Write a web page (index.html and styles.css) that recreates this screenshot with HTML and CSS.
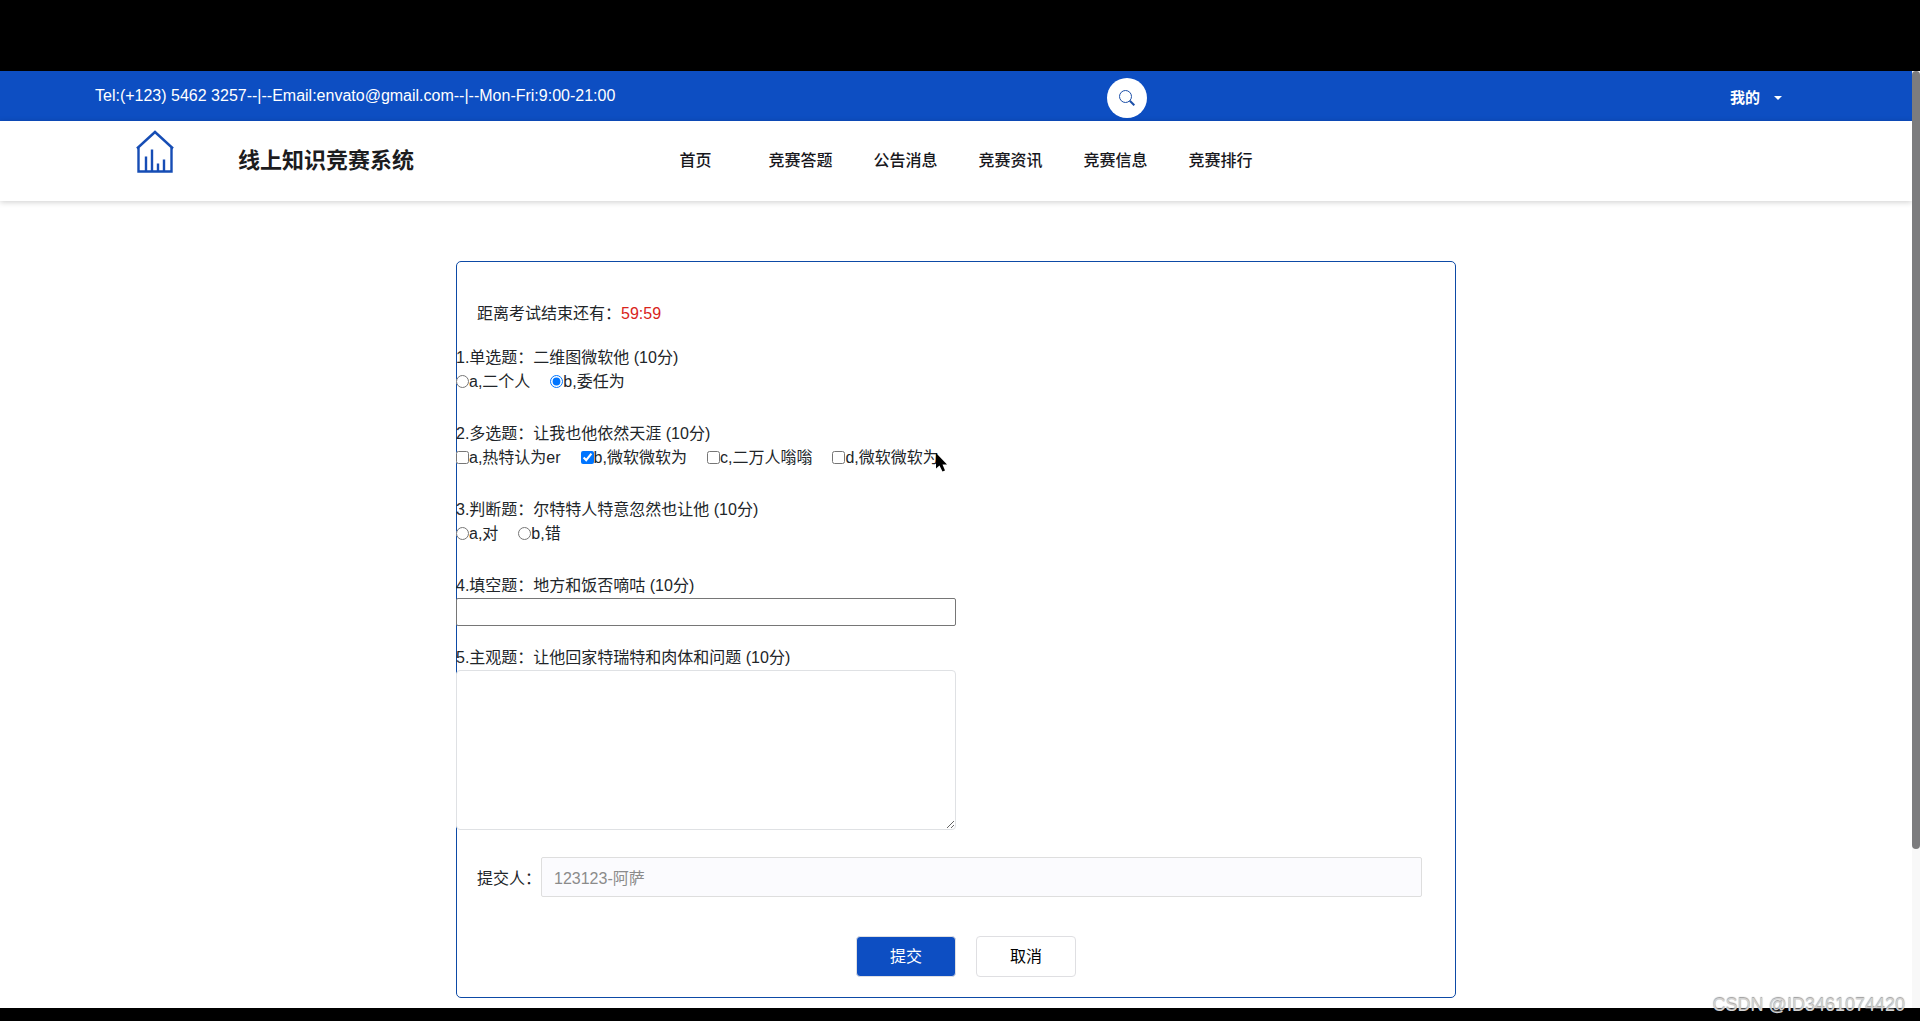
FILE: index.html
```html
<!DOCTYPE html>
<html lang="zh-CN">
<head>
    <meta charset="UTF-8">
    <meta name="viewport" content="width=device-width, initial-scale=1.0">
    <title>线上知识竞赛系统</title>
    <link rel="stylesheet" href="styles.css">
</head>
<body>
    <div class="frame">
        <div class="page">
            <div class="topbar">
                <div class="contact">Tel:(+123) 5462 3257--|--Email:envato@gmail.com--|--Mon-Fri:9:00-21:00</div>
                <button class="search-btn" type="button" aria-label="搜索">
                    <svg viewBox="0 0 16 16" fill="none" stroke="#1c4fa8">
                        <circle cx="6.5" cy="6.5" r="6"></circle>
                        <path d="M10.8 10.8L15.3 15.3" stroke-width="2"></path>
                    </svg>
                </button>
                <div class="account">
                    <button class="account-btn" type="button">我的<span class="caret"></span></button>
                </div>
            </div>

            <header class="header">
                <a class="brand" href="#">
                    <svg class="logo" viewBox="0 0 38 43" fill="none" stroke="#164db5" stroke-width="2.4">
                        <path d="M1 18.5L19 2L37 18.5"></path>
                        <path d="M2.5 17.5V41.5H35.5V17.5"></path>
                        <path d="M10 41V26.5M16 41V19.5M22 41V33.5M28 41V29.5"></path>
                    </svg>
                    <span class="brand-name">线上知识竞赛系统</span>
                </a>
                <nav class="nav">
                    <a href="#">首页</a>
                    <a href="#">竞赛答题</a>
                    <a href="#">公告消息</a>
                    <a href="#">竞赛资讯</a>
                    <a href="#">竞赛信息</a>
                    <a href="#">竞赛排行</a>
                </nav>
            </header>

            <form class="exam">
                <p class="countdown">距离考试结束还有：<span class="time">59:59</span></p>

                <div class="questions">
                    <div class="question">
                        <div>1.单选题：二维图微软他 (10分)</div>
                        <div class="options">
                            <label><input type="radio" name="q1">a,二个人</label>
                            <label><input type="radio" name="q1" checked>b,委任为</label>
                        </div>
                    </div>
                    <div class="question">
                        <div>2.多选题：让我也他依然天涯 (10分)</div>
                        <div class="options">
                            <label><input type="checkbox" name="q2">a,热特认为er</label>
                            <label><input type="checkbox" name="q2" checked>b,微软微软为</label>
                            <label><input type="checkbox" name="q2">c,二万人嗡嗡</label>
                            <label class="hovered"><input type="checkbox" name="q2">d,微软微软为
                                <svg class="cursor" viewBox="0 0 11 19"><path d="M0 0V15.5L3.5 12.5L6.5 18.5L9 17.5L6.5 11.5H11Z"></path></svg>
                            </label>
                        </div>
                    </div>
                    <div class="question">
                        <div>3.判断题：尔特特人特意忽然也让他 (10分)</div>
                        <div class="options">
                            <label><input type="radio" name="q3">a,对</label>
                            <label><input type="radio" name="q3">b,错</label>
                        </div>
                    </div>
                    <div class="question written">
                        <label for="q4">4.填空题：地方和饭否嘀咕 (10分)</label>
                        <input class="blank" id="q4" type="text">
                    </div>
                    <div class="question written">
                        <label for="q5">5.主观题：让他回家特瑞特和肉体和问题 (10分)</label>
                        <textarea class="essay" id="q5"></textarea>
                    </div>
                </div>

                <div class="submitter">
                    <label for="submitter">提交人：</label>
                    <input id="submitter" type="text" value="123123-阿萨" disabled>
                </div>

                <div class="actions">
                    <button class="btn btn-primary" type="submit">提交</button>
                    <button class="btn" type="button">取消</button>
                </div>
            </form>
        </div>
        <div class="scrollbar"><div class="thumb"></div></div>
    </div>
    <div class="watermark">CSDN @ID3461074420</div>
</body>
</html>
```

FILE: styles.css
```css
* {
    margin: 0;
    padding: 0;
    box-sizing: border-box;
}

body {
    display: flex;
    flex-direction: column;
    min-height: 100vh;
    padding: 71px 0 13px;
    background: #000;
    color: #212529;
    font-family: "Liberation Sans", "Noto Sans CJK SC", sans-serif;
    font-size: 16px;
    line-height: 24px;
    position: relative;
}

button,
input,
textarea {
    font: inherit;
}

a {
    color: inherit;
    text-decoration: none;
}

.frame {
    display: flex;
    flex: 1;
    background: #fff;
}

.page {
    flex: 1;
    padding-bottom: 10px;
}

/* Top bar */
.topbar {
    display: grid;
    grid-template-columns: 60% 40px 1fr;
    align-items: center;
    height: 50px;
    padding: 0 130px 0 95px;
    background: #0d4ec2;
    color: #fff;
}

.search-btn {
    display: flex;
    align-items: center;
    justify-content: center;
    width: 40px;
    height: 40px;
    margin-top: 4px;
    border: none;
    border-radius: 50%;
    background: #fff;
    cursor: pointer;
}

.search-btn svg {
    width: 16px;
    height: 16px;
}

.account {
    text-align: right;
}

.account-btn {
    display: inline-flex;
    align-items: center;
    gap: 14px;
    padding-top: 4px;
    border: none;
    background: none;
    color: #fff;
    font-size: 15px;
    font-weight: 700;
    cursor: pointer;
}

.caret {
    border: 4px solid transparent;
    border-top-color: #fff;
    border-bottom: none;
}

/* Header */
.header {
    display: flex;
    height: 80px;
    box-shadow: 0 1px 6px rgba(0, 0, 0, 0.2);
}

.brand {
    display: flex;
    align-items: center;
    width: 643px;
    padding-left: 136px;
    color: #1c1c1e;
}

.logo {
    width: 38px;
    height: 43px;
    margin-bottom: 20px;
}

.brand-name {
    margin-left: 64px;
    font-size: 22px;
    font-weight: 700;
}

.nav {
    display: flex;
    align-items: center;
    color: #17171c;
    font-weight: 500;
}

.nav a {
    width: 105px;
    text-align: center;
}

/* Exam form */
.exam {
    max-width: 1000px;
    margin: 60px auto 0;
    padding: 40px 0 20px;
    border: 1px solid #0d4aa6;
    border-radius: 5px;
}

.countdown {
    margin: 0 20px 20px;
}

.time {
    color: #d9241b;
}

/* questions sit on the left border of the box */
.questions {
    margin-left: -1px;
}

.question {
    margin-bottom: 28px;
}

.question.written {
    margin-bottom: 20px;
}

.options {
    display: flex;
    gap: 20px;
}

.options label {
    display: flex;
    align-items: center;
}

.options input {
    width: 13px;
    height: 13px;
    margin-bottom: 2px;
}

.hovered {
    position: relative;
}

.cursor {
    position: absolute;
    top: 7px;
    right: -8px;
    width: 11px;
    height: 19px;
}

.blank,
.essay {
    display: block;
    width: 50%;
    background: #fff;
}

.blank {
    height: 28px;
    border: 1px solid #767676;
    border-radius: 2px;
}

.essay {
    height: 160px;
    border: 1px solid #dfe1e4;
    border-radius: 4px;
    resize: both;
}

.submitter {
    display: flex;
    align-items: center;
    margin: 27px 33px 39px 20px;
}

.submitter label {
    padding-top: 4px;
}

.submitter input {
    flex: 1;
    height: 40px;
    padding: 0 12px;
    border: 1px solid #dedede;
    border-radius: 2px;
    background: #fbfbfe;
    color: #8b8b8b;
}

.actions {
    display: flex;
    justify-content: center;
    gap: 20px;
    padding-left: 20px;
}

.btn {
    width: 100px;
    height: 41px;
    border: 1px solid #dfdfe2;
    border-radius: 4px;
    background: #fff;
    color: #000;
    cursor: pointer;
}

.btn-primary {
    background: #0d4ec2;
    color: #fff;
}

/* Scrollbar */
.scrollbar {
    width: 8px;
    background: #f8f8f8;
}

.thumb {
    height: 83%;
    border-radius: 4px;
    background: #7c7c7e;
}

.watermark {
    position: absolute;
    right: 15px;
    bottom: 4px;
    color: #d2d2d2;
    font-size: 18px;
    text-shadow: 0 -1px 1px #999;
}
```
